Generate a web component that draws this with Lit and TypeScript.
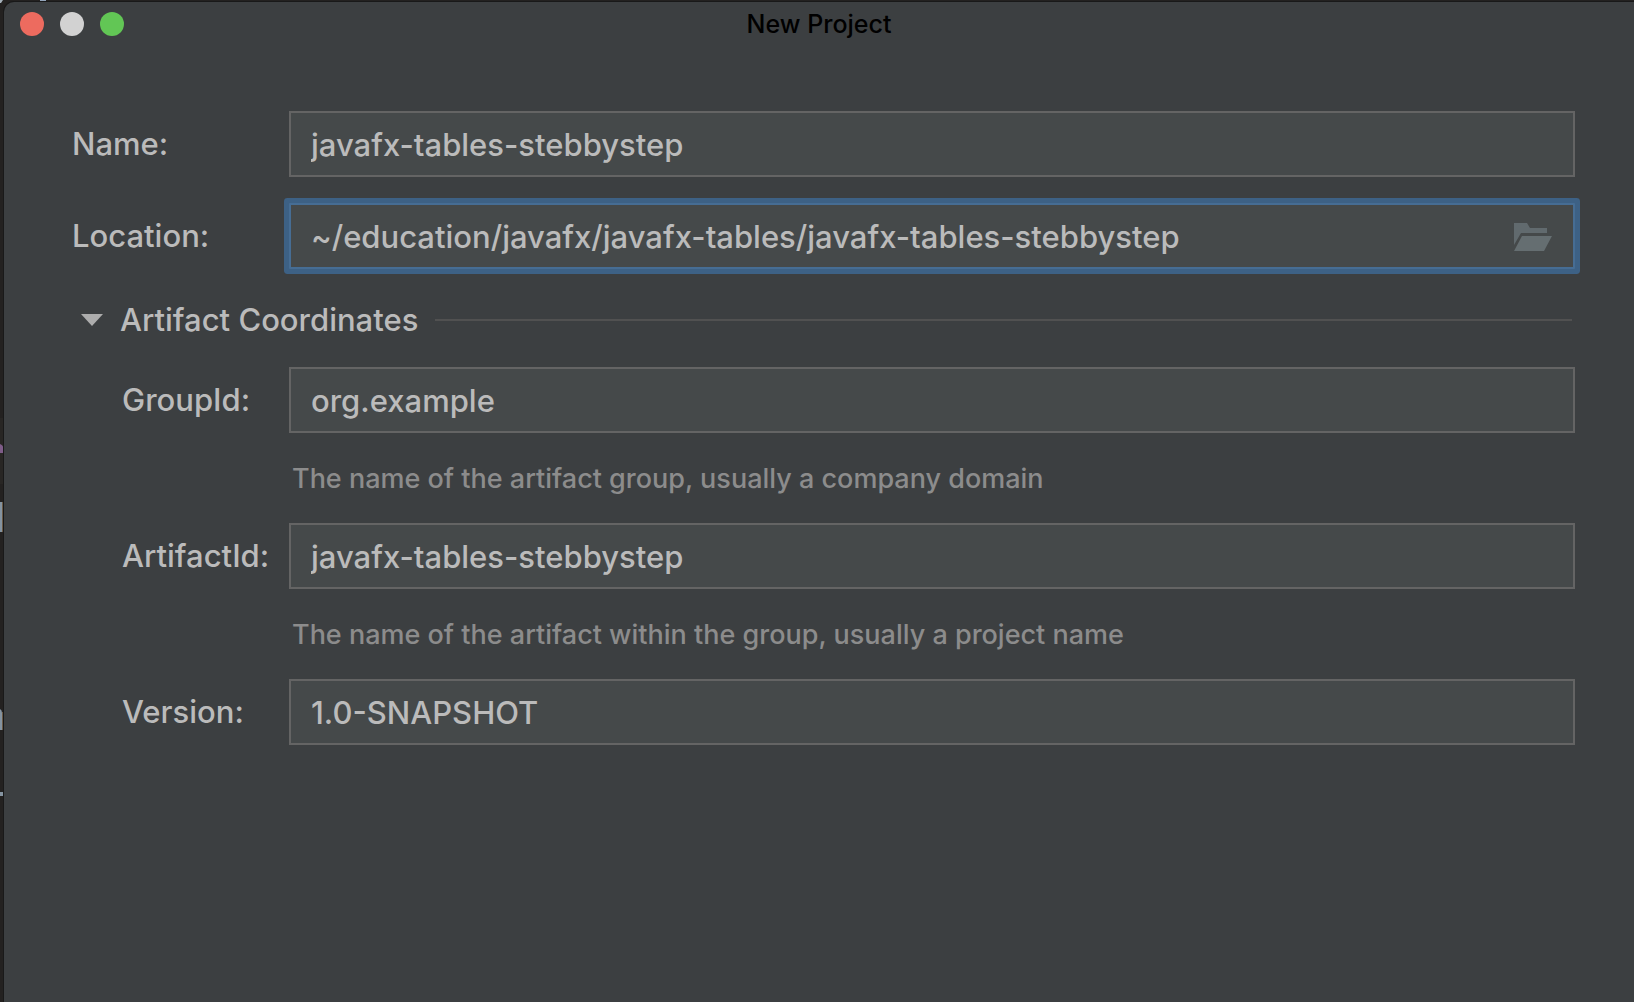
import { LitElement, html, css, svg } from "lit";
import { customElement, property, state } from "lit/decorators.js";

@customElement("desktop-backdrop")
class DesktopBackdrop extends LitElement {
  static styles = css`
    :host {
      display: block;
      position: absolute;
      inset: 0;
      background: #232120;
    }
    .art {
      display: block;
    }
  `;

  render() {
    return html`<svg class="art" width="60" height="820" viewBox="0 0 60 820" aria-hidden="true">
      ${svg`
        <rect x="0" y="418" width="4" height="66" fill="#282624" />
        <path d="M0 0H3L1 3H0Z" fill="#a7b2bb" />
        <rect x="40" y="0" width="6" height="2" fill="#93a5bb" />
        <path d="M0 444Q3 445 4 449V453H0Z" fill="#7e5c88" />
        <rect x="0" y="502" width="2" height="30" fill="#8493a0" />
        <rect x="2" y="502" width="1" height="30" fill="#6b5a45" />
        <path d="M0 709Q2 710 2 713V730H0Z" fill="#8493a0" />
        <rect x="2" y="712" width="1" height="18" fill="#6b5a45" />
        <rect x="0" y="792" width="4" height="4" fill="#8493a0" />
      `}
    </svg>`;
  }
}

@customElement("title-bar")
class TitleBar extends LitElement {
  static styles = css`
    :host {
      display: grid;
      grid-template-columns: 1fr auto 1fr;
      align-items: center;
      height: 44px;
      padding: 0 16px;
    }
    .lights {
      display: flex;
      gap: 16px;
    }
    .light {
      width: 24px;
      height: 24px;
      padding: 0;
      border: 0;
      border-radius: 50%;
    }
    .close {
      background: #ed6b5f;
    }
    .minimize {
      background: #d2d2d2;
    }
    .zoom {
      background: #62c655;
    }
    .title {
      margin: 0;
      font-size: 25px;
      font-weight: 500;
      line-height: 32px;
      color: #000;
    }
  `;

  render() {
    return html`
      <div class="lights">
        <button class="light close" aria-label="Close"></button>
        <button class="light minimize" aria-label="Minimize"></button>
        <button class="light zoom" aria-label="Zoom"></button>
      </div>
      <h1 class="title">New Project</h1>
    `;
  }
}

@customElement("form-field")
class FormField extends LitElement {
  @property() label = "";
  @property() value = "";
  @property() hint = "";
  @property({ type: Boolean }) browse = false;
  @property({ type: Boolean, reflect: true }) nested = false;

  static styles = css`
    :host {
      display: grid;
      grid-template-columns: 217px 1fr;
      align-items: center;
    }
    :host([nested]) .label {
      padding-left: 50px;
    }
    .label {
      font-size: 31px;
      line-height: 36px;
      color: #bbbbbb;
      white-space: nowrap;
    }
    .box {
      display: flex;
      align-items: center;
      height: 66px;
      box-sizing: border-box;
      border: 2px solid #646464;
      background: #45494a;
    }
    .active {
      border-color: #466d94;
      box-shadow: 0 0 0 5px #3d6185;
      border-radius: 1px;
    }
    .input {
      flex: 1;
      min-width: 0;
      height: 100%;
      padding: 0 20px;
      border: 0;
      outline: 0;
      background: none;
      font: inherit;
      font-size: 31px;
      color: #bbbbbb;
    }
    .browse {
      display: flex;
      padding: 0;
      margin-right: 20px;
      border: 0;
      background: none;
    }
    .hint {
      grid-column: 2;
      margin: 30px 0 28px;
      padding-left: 3px;
      font-size: 27px;
      line-height: 32px;
      color: #8c8c8c;
    }
  `;

  render() {
    return html`
      <label class="label" for="input">${this.label}</label>
      <div class="box ${this.browse ? "active" : ""}">
        <input
          class="input"
          id="input"
          type="text"
          spellcheck="false"
          .value=${this.value}
        />
        ${this.browse
          ? html`<button class="browse" type="button" aria-label="Browse">
              <svg width="40" height="32" viewBox="0 0 40 32" aria-hidden="true">
                <path d="M1 3H14L17 8H34V13H8L1 25Z" fill="#616a6e" />
                <path d="M9 16H39L31 31H1Z" fill="#656e71" />
              </svg>
            </button>`
          : ""}
      </div>
      ${this.hint ? html`<p class="hint">${this.hint}</p>` : ""}
    `;
  }
}

@customElement("app-root")
class AppRoot extends LitElement {
  @state() private open = true;

  static styles = css`
    :host {
      display: flex;
      position: relative;
      min-height: 100vh;
      box-sizing: border-box;
      padding: 2px 0 0 4px;
      overflow: hidden;
      font-family: Inter, "Liberation Sans", sans-serif;
      font-weight: 500;
    }
    .window {
      position: relative;
      flex: 1;
      min-width: 0;
      border-radius: 10px 0 0 0;
      background: #3c3f41;
      box-shadow: 0 0 0 1px #191919;
    }
    .form {
      padding: 65px 59px 0 68px;
    }
    .general {
      display: grid;
      gap: 26px;
    }
    .section {
      display: flex;
      align-items: center;
      gap: 17px;
      margin: 33px 3px 29px 9px;
    }
    .toggle {
      display: flex;
      align-items: center;
      gap: 17px;
      padding: 0;
      border: 0;
      background: none;
      font: inherit;
      font-size: 31px;
      line-height: 36px;
      color: #bbbbbb;
    }
    .rule {
      flex: 1;
      height: 2px;
      background: #515151;
    }
  `;

  render() {
    return html`
      <desktop-backdrop></desktop-backdrop>
      <main class="window">
        <title-bar></title-bar>
        <form class="form">
          <div class="general">
            <form-field label="Name:" value="javafx-tables-stebbystep"></form-field>
            <form-field
              label="Location:"
              value="~/education/javafx/javafx-tables/javafx-tables-stebbystep"
              browse
            ></form-field>
          </div>
          <div class="section">
            <button
              class="toggle"
              type="button"
              aria-expanded=${this.open ? "true" : "false"}
              @click=${() => (this.open = !this.open)}
            >
              <svg width="22" height="12" viewBox="0 0 22 12" aria-hidden="true">
                <path d="M0 0H22L11 12Z" fill="#adadad" />
              </svg>
              Artifact Coordinates
            </button>
            <div class="rule"></div>
          </div>
          ${this.open
            ? html`
                <form-field
                  nested
                  label="GroupId:"
                  value="org.example"
                  hint="The name of the artifact group, usually a company domain"
                ></form-field>
                <form-field
                  nested
                  label="ArtifactId:"
                  value="javafx-tables-stebbystep"
                  hint="The name of the artifact within the group, usually a project name"
                ></form-field>
                <form-field nested label="Version:" value="1.0-SNAPSHOT"></form-field>
              `
            : ""}
        </form>
      </main>
    `;
  }
}
